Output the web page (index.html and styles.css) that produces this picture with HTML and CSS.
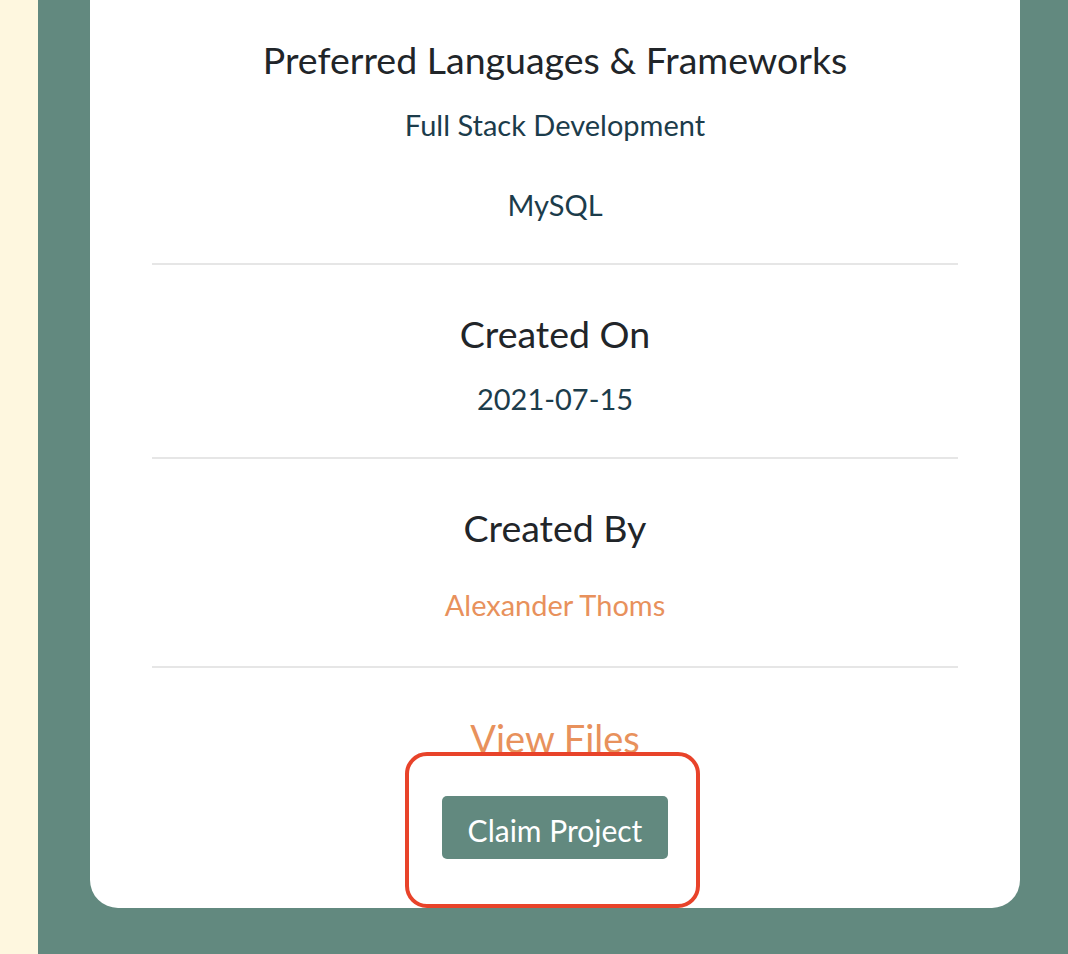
FILE: index.html
```html
<!DOCTYPE html>
<html lang="en">
<head>
<meta charset="utf-8">
<title>Project details</title>
<link rel="stylesheet" href="styles.css">
</head>
<body>
<div class="page">
  <aside class="strip"></aside>
  <main class="main">
    <section class="card">
      <div class="block">
        <h4 class="label">Preferred Languages &amp; Frameworks</h4>
        <p class="value first">Full Stack Development</p>
        <p class="value second">MySQL</p>
      </div>
      <hr class="sep">
      <div class="block">
        <h4 class="label">Created On</h4>
        <p class="value first">2021-07-15</p>
      </div>
      <hr class="sep">
      <div class="block">
        <h4 class="label">Created By</h4>
        <p class="value author"><a href="#" class="link">Alexander Thoms</a></p>
      </div>
      <hr class="sep sep-last">
      <div class="block actions">
        <a href="#" class="files">View Files</a>
        <div class="claim-wrap">
          <button class="claim" type="button">Claim Project</button>
          <span class="highlight"></span>
        </div>
      </div>
    </section>
  </main>
</div>
</body>
</html>
```

FILE: styles.css
```css
html, body {
  margin: 0;
  padding: 0;
  height: 100%;
}

body {
  font-family: "Lato", "Noto Sans", sans-serif;
  background: #62897f;
}

.page {
  display: flex;
  min-height: 954px;
}

.strip {
  width: 38px;
  flex: none;
  background: #fef7df;
}

.main {
  flex: 1;
  background: #62897f;
  padding: 0 48px 46px 52px;
}

.card {
  width: 930px;
  background: #ffffff;
  border-radius: 0 0 28px 28px;
  padding: 0 62px 49px;
  box-sizing: border-box;
  text-align: center;
}

.block {
  display: flex;
  flex-direction: column;
  align-items: center;
}

.label {
  margin: 35px 0 0;
  font-weight: 400;
  font-size: 37.5px;
  line-height: 50px;
  color: #212529;
}

.block + .sep + .block .label {
  margin-top: 44px;
}

.value {
  margin: 0;
  font-size: 29px;
  line-height: 40px;
  color: #1c3c4b;
}

.value.first {
  margin-top: 20px;
}

.value.second {
  margin-top: 40px;
}

.value.author {
  margin-top: 32px;
}

.link {
  color: #e8915c;
  text-decoration: none;
}

.sep {
  margin: 38px 0 0;
  border: 0;
  border-top: 2px solid #e6e6e6;
  height: 0;
}

.sep-last {
  margin-top: 41px;
}

.actions {
  padding-top: 45px;
}

.files {
  font-size: 38px;
  line-height: 50px;
  color: #e8915c;
  text-decoration: none;
}

.claim-wrap {
  position: relative;
  margin-top: 33px;
}

.claim {
  display: block;
  width: 226px;
  height: 63px;
  border: 0;
  border-radius: 5px;
  background: #62897f;
  color: #ffffff;
  font-family: "Lato", "Noto Sans", sans-serif;
  font-size: 30px;
  padding: 5px 0 0;
}

.highlight {
  position: absolute;
  left: -37px;
  top: -44px;
  right: -32px;
  bottom: -49px;
  border: 4px solid #e8432a;
  border-radius: 22px;
  pointer-events: none;
}
```
